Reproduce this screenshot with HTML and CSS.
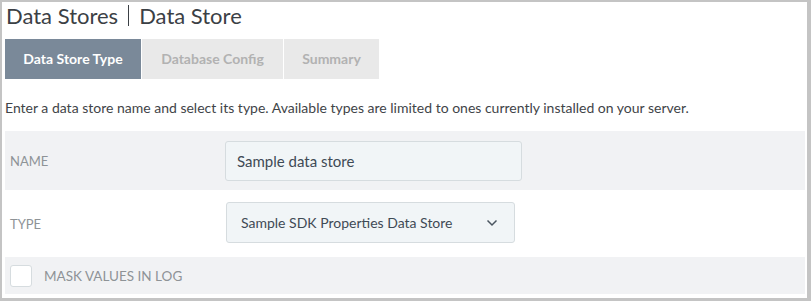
FILE: index.html
```html
<!DOCTYPE html>
<html lang="en">
<head>
    <meta charset="UTF-8">
    <title>Data Store</title>
    <link rel="stylesheet" href="styles.css">
</head>
<body>
    <div class="frame">
        <h1 class="page-title">
            <span>Data Stores</span>
            <span class="divider"></span>
            <span>Data Store</span>
        </h1>
        <div class="tabs">
            <div class="tab active">Data Store Type</div>
            <div class="tab">Database Config</div>
            <div class="tab">Summary</div>
        </div>
        <p class="description">Enter a data store name and select its type. Available types are limited to ones currently installed on your server.</p>
        <div class="form">
            <div class="row shaded">
                <label class="row-label">NAME</label>
                <div class="input name-input">Sample data store</div>
            </div>
            <div class="row">
                <label class="row-label">TYPE</label>
                <div class="input select">
                    <span>Sample SDK Properties Data Store</span>
                    <svg class="chevron" width="12" height="8" viewBox="0 0 12 8">
                        <path d="M1.5 1.5 L6 6 L10.5 1.5" fill="none" stroke="#4a5560" stroke-width="1.5"/>
                    </svg>
                </div>
            </div>
            <div class="row shaded check-row">
                <span class="checkbox"></span>
                <span class="check-label">MASK VALUES IN LOG</span>
            </div>
        </div>
    </div>
</body>
</html>
```

FILE: styles.css
```css
html, body {
    margin: 0;
    padding: 0;
    background: #fff;
}

body {
    font-family: Lato, "Liberation Sans", sans-serif;
    color: #3f4448;
}

.frame {
    box-sizing: border-box;
    width: 811px;
    height: 301px;
    border: solid #c4c4c4;
    border-width: 2px 4px 3px 2px;
    padding: 0 2px 0 3px;
    overflow: hidden;
}

.page-title {
    display: flex;
    align-items: center;
    margin: 0;
    height: 26px;
    font-size: 22px;
    font-weight: normal;
    color: #3b4045;
    padding-left: 1px;
}

.divider {
    width: 1px;
    height: 21px;
    background: #3b4045;
    margin: 0 10px 0 10px;
}

.tabs {
    display: flex;
    margin-top: 11px;
    gap: 1px;
}

.tab {
    height: 40px;
    line-height: 40px;
    font-size: 14px;
    font-weight: bold;
    color: #b2b2b2;
    background: #e9e9e9;
    text-align: center;
    box-sizing: border-box;
}

.tab:nth-child(1) { width: 136px; }
.tab:nth-child(2) { width: 141px; }
.tab:nth-child(3) { width: 95px; }

.tab.active {
    background: #7a8999;
    color: #fff;
}

.description {
    margin: 19px 0 13px;
    line-height: 20px;
    font-size: 14px;
    color: #3f4448;
}

.row {
    display: flex;
    align-items: center;
    height: 67px;
}

.row.shaded {
    background: #f1f2f4;
}

.form .row:first-child {
    height: 59px;
}

.row-label {
    width: 215px;
    padding-left: 5px;
    font-size: 13px;
    color: #8e9397;
}

.input {
    box-sizing: border-box;
    height: 40px;
    border: 1px solid #d6dcdf;
    border-radius: 3px;
    background: #f1f5f7;
    font-size: 14px;
    color: #3f4a55;
    display: flex;
    align-items: center;
}

.name-input {
    width: 297px;
    padding-left: 11px;
    font-size: 15px;
}

.select {
    width: 289px;
    height: 41px;
    margin-left: 1px;
    margin-bottom: 2px;
    padding: 0 16px 0 14px;
    justify-content: space-between;
}

.check-row {
    height: 37px;
}

.checkbox {
    box-sizing: border-box;
    width: 22px;
    height: 22px;
    border: 1px solid #d6dcdf;
    border-radius: 3px;
    background: #fff;
    margin: 0 12px 0 5px;
}

.check-label {
    font-size: 13.5px;
    color: #8e9397;
}
```
